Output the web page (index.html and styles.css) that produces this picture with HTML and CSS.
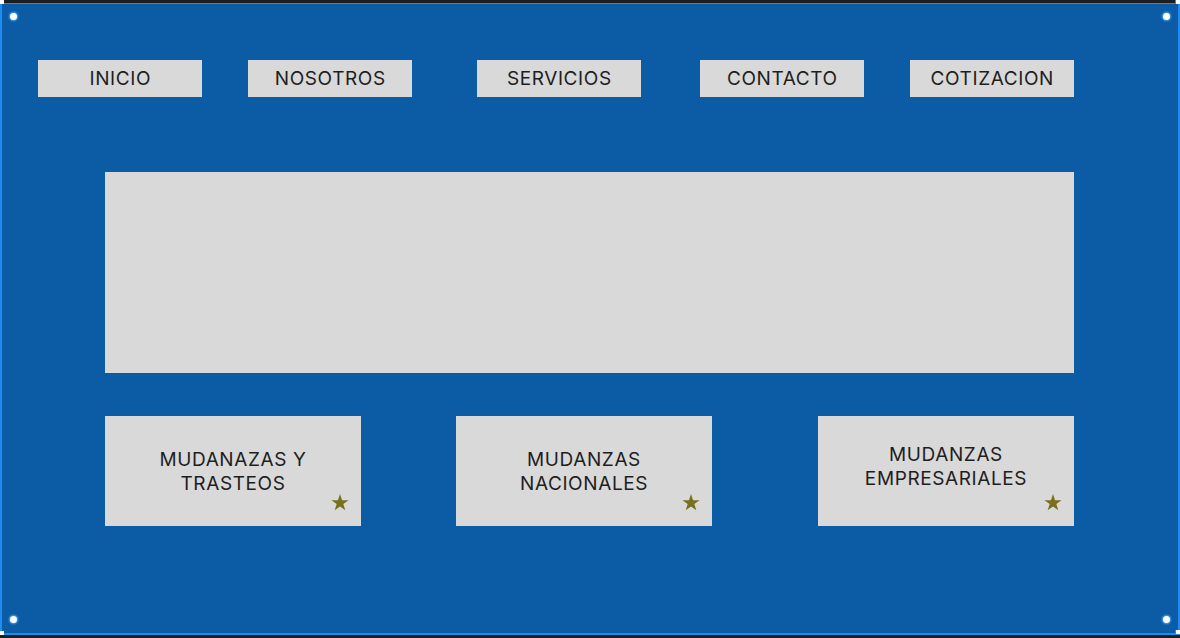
FILE: index.html
```html
<!DOCTYPE html>
<html lang="es">
<head>
<meta charset="utf-8">
<title>Mudanzas</title>
<link rel="stylesheet" href="styles.css">
</head>
<body>
<div class="frame">
  <nav class="nav">
    <a class="nav-item">INICIO</a>
    <a class="nav-item">NOSOTROS</a>
    <a class="nav-item">SERVICIOS</a>
    <a class="nav-item">CONTACTO</a>
    <a class="nav-item">COTIZACION</a>
  </nav>
  <div class="hero"></div>
  <div class="cards">
    <div class="card"><p class="card-text">MUDANAZAS Y<br>TRASTEOS</p>
      <svg class="star" viewBox="0 0 24 23"><polygon points="12,0 14.8,8.4 23.6,8.4 16.5,13.6 19.2,22 12,16.8 4.8,22 7.5,13.6 0.4,8.4 9.2,8.4"/></svg></div>
    <div class="card"><p class="card-text">MUDANZAS<br>NACIONALES</p>
      <svg class="star" viewBox="0 0 24 23"><polygon points="12,0 14.8,8.4 23.6,8.4 16.5,13.6 19.2,22 12,16.8 4.8,22 7.5,13.6 0.4,8.4 9.2,8.4"/></svg></div>
    <div class="card"><p class="card-text card-text-up">MUDANZAS<br>EMPRESARIALES</p>
      <svg class="star" viewBox="0 0 24 23"><polygon points="12,0 14.8,8.4 23.6,8.4 16.5,13.6 19.2,22 12,16.8 4.8,22 7.5,13.6 0.4,8.4 9.2,8.4"/></svg></div>
  </div>
  <span class="dot dot-tl"></span>
  <span class="dot dot-tr"></span>
  <span class="dot dot-bl"></span>
  <span class="dot dot-br"></span>
</div>
<span class="handle handle-tl"></span>
<span class="handle handle-tr"></span>
<span class="handle handle-bl"></span>
<span class="handle handle-br"></span>
</body>
</html>
```
FILE: styles.css
```css
html, body {
  margin: 0;
  padding: 0;
  background: #1e1e1e;
  height: 638px;
  overflow: hidden;
}
body {
  position: relative;
  padding-top: 3px;
  box-sizing: border-box;
  font-family: Inter, "Liberation Sans", sans-serif;
}
.frame {
  position: relative;
  box-sizing: border-box;
  width: 1180px;
  height: 632px;
  background: #0b5ba5;
  border: 2px solid #1c8cf2;
  border-top-width: 1px;
}
.nav {
  display: flex;
  padding-left: 36px;
  padding-top: 56px;
}
.nav-item {
  width: 164px;
  height: 37px;
  background: #d9d9d9;
  display: flex;
  align-items: center;
  justify-content: center;
  font-size: 19px;
  color: #1e1e1e;
  letter-spacing: 0.6px;
  text-indent: 0.6px;
}
.nav-item:nth-child(2) { margin-left: 46px; }
.nav-item:nth-child(3) { margin-left: 65px; }
.nav-item:nth-child(4) { margin-left: 59px; }
.nav-item:nth-child(5) { margin-left: 46px; }
.hero {
  margin: 75px 0 0 103px;
  width: 969px;
  height: 201px;
  background: #d9d9d9;
}
.cards {
  display: flex;
  margin: 43px 0 0 103px;
}
.card {
  position: relative;
  width: 256px;
  height: 110px;
  background: #d9d9d9;
  display: flex;
  align-items: center;
  justify-content: center;
}
.card:nth-child(2) { margin-left: 95px; }
.card:nth-child(3) { margin-left: 106px; }
.card-text {
  margin: 2px 0 0;
  font-size: 19px;
  line-height: 24px;
  color: #1e1e1e;
  text-align: center;
  letter-spacing: 0.6px;
}
.card-text-up {
  margin: 0 0 8px;
}
.star {
  position: absolute;
  right: 12px;
  bottom: 15px;
  width: 18px;
  height: 17px;
  fill: #7a6f1d;
}
.dot {
  position: absolute;
  width: 7px;
  height: 7px;
  border-radius: 50%;
  background: #ffffff;
  box-shadow: 0 0 2px 1px #4aa8ff;
}
.dot-tl { left: 8px; top: 9px; }
.dot-tr { right: 8px; top: 9px; }
.dot-bl { left: 8px; bottom: 10px; }
.dot-br { right: 8px; bottom: 10px; }
.handle {
  position: absolute;
  width: 4px;
  height: 4px;
  background: #ffffff;
  border: 0 solid #1c8cf2;
}
.handle-tl { left: 0; top: 0; }
.handle-tr { right: 0; top: 0; border-left-width: 1px; }
.handle-bl { left: 0; top: 631px; }
.handle-br { right: 0; top: 630px; border-left-width: 1px; }
```
